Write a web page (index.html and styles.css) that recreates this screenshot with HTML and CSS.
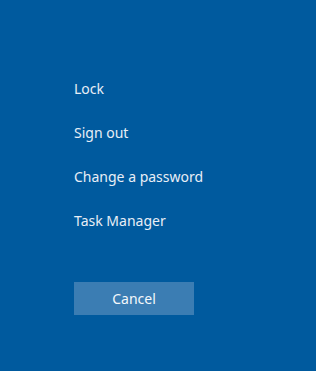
FILE: index.html
```html
<!DOCTYPE html>
<html lang="en">
<head>
    <meta charset="UTF-8">
    <meta name="viewport" content="width=device-width, initial-scale=1.0">
    <title>Security options</title>
    <link rel="stylesheet" href="styles.css">
</head>
<body>
    <div class="security-screen">
        <ul class="option-list">
            <li class="option-item">Lock</li>
            <li class="option-item">Sign out</li>
            <li class="option-item">Change a password</li>
            <li class="option-item">Task Manager</li>
        </ul>
        <button class="cancel-button">Cancel</button>
    </div>
</body>
</html>
```

FILE: styles.css
```css
:root {
    --bg-color: #005a9e; --text-color: #e8eef6;
    --button-bg: #3b7db3; --button-text: #f4f8fb;
}
html, body { margin: 0; padding: 0; height: 100%; }
body { background-color: var(--bg-color); color: var(--text-color); font-family: "Noto Sans", "Open Sans", sans-serif; font-size: 14px; }
.security-screen { display: flex; flex-direction: column; align-items: flex-start; padding: 67px 0 0 74px; }
.option-list { list-style: none; margin: 0; padding: 0; }
.option-item { height: 44px; line-height: 44px; white-space: nowrap; }
.cancel-button { margin-top: 39px; width: 120px; height: 33px; border: none; background-color: var(--button-bg); color: var(--button-text); font-family: inherit; font-size: 14px; padding: 0; cursor: pointer; }
```
